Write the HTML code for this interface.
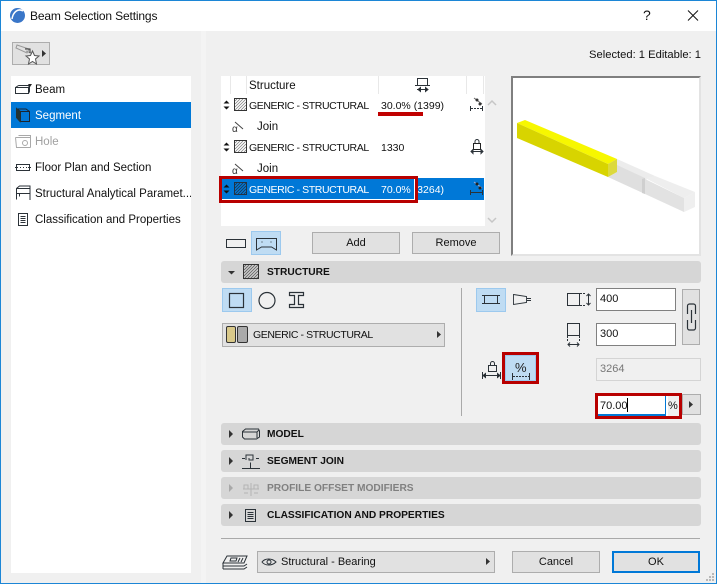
<!DOCTYPE html>
<html><head><meta charset="utf-8"><style>
html,body{margin:0;padding:0;background:#f0f0f0}
#p{position:relative;width:717px;height:584px;overflow:hidden;background:#f0f0f0;font-family:"Liberation Sans",sans-serif;font-size:11.5px;color:#111}
#p div{position:absolute;box-sizing:border-box}
.t{white-space:nowrap;height:16px;line-height:16px}
.u{font-size:10.5px;letter-spacing:-.4px}
.n{font-size:10.5px}
.b{background:#e1e1e1;border:1px solid #adadad;text-align:center;line-height:21px;font-size:11px}
.h{left:221px;width:480px;height:22px;background:#d6d6d6;border-radius:3px}
.ht{left:267px;font-weight:bold;font-size:10.2px;letter-spacing:0}
.a{background:#bfdcf3;border:1px solid #9cc9ee}
.i{background:#fff;border:1px solid #808080;padding-left:3px;line-height:21px;font-size:11px}
svg{position:absolute;left:0;top:0}
</style></head><body><div id="p">
<div style="left:0;top:0;width:717px;height:31px;background:#fff"></div>
<div style="left:201px;top:31px;width:5px;height:552px;background:#f4f4f4"></div>
<div style="left:11px;top:76px;width:180px;height:497px;background:#fff"></div>
<div style="left:11px;top:102px;width:180px;height:26px;background:#0078d7"></div>
<div class="t" style="left:30px;top:8px;font-size:12px;letter-spacing:-.15px">Beam Selection Settings</div>
<div class="t" style="left:643px;top:7px;font-size:14px">?</div>
<div class="t" style="right:16px;top:47px;font-size:11.2px">Selected: 1 Editable: 1</div>
<div style="left:12px;top:42px;width:38px;height:23px;background:#e1e1e1;border:1px solid #adadad"></div>

<div class="t" style="left:35px;top:82px">Beam</div>
<div class="t" style="left:35px;top:108px;color:#fff">Segment</div>
<div class="t" style="left:35px;top:134px;color:#a0a0a0">Hole</div>
<div class="t" style="left:35px;top:160px">Floor Plan and Section</div>
<div class="t" style="left:35px;top:186px;width:156px;overflow:hidden">Structural Analytical Paramet...</div>
<div class="t" style="left:35px;top:212px">Classification and Properties</div>

<div style="left:221px;top:76px;width:264px;height:150px;background:#fff"></div>
<div style="left:221px;top:178px;width:263px;height:22px;background:#0078d7"></div>
<div style="left:230px;top:76px;width:1px;height:18px;background:#e8e8e8"></div>
<div style="left:246px;top:76px;width:1px;height:18px;background:#e8e8e8"></div>
<div style="left:378px;top:76px;width:1px;height:18px;background:#e8e8e8"></div>
<div style="left:466px;top:76px;width:1px;height:18px;background:#e8e8e8"></div>
<div style="left:483px;top:76px;width:1px;height:18px;background:#e8e8e8"></div>
<div class="t" style="left:249px;top:78px">Structure</div>
<div class="t u" style="left:249px;top:98px">GENERIC - STRUCTURAL</div>
<div class="t n" style="left:381px;top:98px">30.0% (1399)</div>
<div class="t" style="left:257px;top:119px">Join</div>
<div class="t u" style="left:249px;top:140px">GENERIC - STRUCTURAL</div>
<div class="t n" style="left:381px;top:140px">1330</div>
<div class="t" style="left:257px;top:161px">Join</div>
<div class="t u" style="left:249px;top:182px;color:#fff">GENERIC - STRUCTURAL</div>
<div class="t n" style="left:381px;top:182px;color:#fff">70.0% (3264)</div>
<div style="left:378px;top:112px;width:45px;height:4px;background:#c00000"></div>
<div style="left:222px;top:199px;width:193px;height:1px;background:#fff"></div>
<div style="left:414px;top:179px;width:1px;height:21px;background:#fff"></div>
<div style="left:219px;top:176px;width:199px;height:27px;border:3px solid #b80000"></div>

<div style="left:511px;top:76px;width:190px;height:180px;background:#fff;border-top:2px solid #7f7f7f;border-left:2px solid #7f7f7f;border-right:2px solid #e3e3e3;border-bottom:2px solid #e3e3e3"></div>

<div class="a" style="left:251px;top:231px;width:30px;height:24px"></div>
<div class="b" style="left:312px;top:232px;width:88px;height:22px">Add</div>
<div class="b" style="left:412px;top:232px;width:88px;height:22px">Remove</div>

<div class="h" style="top:261px"></div>
<div class="t ht" style="top:265px">STRUCTURE</div>
<div class="a" style="left:222px;top:288px;width:30px;height:24px"></div>
<div class="b" style="left:222px;top:323px;width:223px;height:24px;text-align:left;padding-left:30px;line-height:23px"><span class="u">GENERIC - STRUCTURAL</span></div>
<div style="left:461px;top:288px;width:1px;height:128px;background:#a9a9a9"></div>
<div class="a" style="left:476px;top:288px;width:30px;height:24px"></div>
<div class="i" style="left:596px;top:288px;width:80px;height:23px">400</div>
<div class="i" style="left:596px;top:323px;width:80px;height:23px">300</div>
<div class="b" style="left:682px;top:289px;width:18px;height:56px"></div>
<div class="i" style="left:596px;top:358px;width:105px;height:23px;background:#f0f0f0;border-color:#d4d4d4;color:#777">3264</div>
<div style="left:502px;top:352px;width:37px;height:32px;border:3px solid #b80000;background:#bfdcf3;outline:1px solid #9cc9ee;outline-offset:-4px"></div>
<div style="left:595px;top:393px;width:87px;height:26px;border:3px solid #b80000;background:#fff"></div>
<div style="left:598px;top:414px;width:68px;height:2px;background:#0078d7"></div>
<div style="left:665px;top:396px;width:1px;height:20px;background:#0078d7"></div>
<div style="left:668px;top:396px;width:11px;height:20px;background:#f0f0f0"></div>
<div class="t" style="left:600px;top:398px;font-size:11px">70.00</div>
<div style="left:627px;top:398px;width:1px;height:14px;background:#000"></div>
<div class="t" style="left:668px;top:398px;font-size:11px">%</div>
<div class="b" style="left:682px;top:394px;width:19px;height:21px"></div>

<div class="h" style="top:423px"></div><div class="t ht" style="top:427px">MODEL</div>
<div class="h" style="top:450px"></div><div class="t ht" style="top:454px">SEGMENT JOIN</div>
<div class="h" style="top:477px"></div><div class="t ht" style="top:481px;color:#808080">PROFILE OFFSET MODIFIERS</div>
<div class="h" style="top:504px"></div><div class="t ht" style="top:508px">CLASSIFICATION AND PROPERTIES</div>
<div style="left:221px;top:538px;width:479px;height:1px;background:#a9a9a9"></div>
<div class="b" style="left:257px;top:551px;width:238px;height:22px;text-align:left;padding-left:23px">Structural - Bearing</div>
<div class="b" style="left:512px;top:551px;width:88px;height:22px">Cancel</div>
<div class="b" style="left:612px;top:551px;width:88px;height:22px;border:2px solid #0078d7;line-height:19px">OK</div>

<svg width="717" height="584" viewBox="0 0 717 584" fill="none" stroke="#2b3238" stroke-width="1">
<!-- window border -->
<path d="M0.5 584V0.5H716.5V584M0 583.5H717" stroke="#1c86d6"/>
<circle cx="17.500" cy="15.500" r="7.500" fill="#3a76c8" stroke="none"/><path d="M12 19c1-7 6-11 11-8" stroke="#fff" stroke-width="1.500"/>
<path d="M688 10.500l10 10M698 10.500l-10 10" stroke="#111"/>
<!-- tool button -->
<path d="M17 45l12 4-2 4-11-5zM26 51l7 3" stroke="#999"/><path d="M25 49h5v4" stroke="#333"/>
<path d="M32.500 51l2 4.500 4.500.5-3.500 3 1 5-4-2.500-4 2.500 1-5-3.500-3 4.500-.5z" fill="#fff" stroke="#555"/>
<path d="M42 50l4 3.500-4 3.500z" fill="#333" stroke="none"/>
<!-- left icons -->
<path d="M15.500 87.500h13v6h-13zM18.500 85.500h11v6l-1 2M15.500 87.500l3-2M28.500 87.500l1-2"/>
<path d="M28 84h4l-2 3z" fill="#222" stroke="none"/>
<path d="M20.500 111.500h9v10h-9zM17 109l3.500 2.500M17 109h9l3.500 2.500" stroke="#1b2530"/><path d="M16.500 108.500v9l3.500 4v-9.500z" fill="#233" stroke="#233"/>
<path d="M15.500 137.500h15M18.500 135.500h12v2M15.500 137.500l1 10h14M30.500 137.500v10" stroke="#a9a9a9"/><circle cx="25" cy="143" r="2.500" stroke="#a9a9a9"/>
<path d="M16.500 164.500h13v6h-13zM15 167.500h16"/><path d="M18 167.500h10" stroke="#fff" stroke-dasharray="2 1"/>
<path d="M16.500 199.500v-11l3-2.500h10.500v14M16.500 188.500h13.500M16.500 193.500h13.500M19.500 193.500v3"/>
<path d="M18.500 213.500h9v12h-9zM20.500 216.500h5M20.500 218.500h5M20.500 220.500h5M20.500 222.500h5"/>
<!-- list icons -->
<g fill="#111" stroke="none"><path d="M226.500 100.500l3 3h-6zM226.500 109.500l3-3h-6zM226.500 142.500l3 3h-6zM226.500 151.500l3-3h-6zM226.500 184.500l3 3h-6zM226.500 193.500l3-3h-6z"/></g>
<path d="M235 101l2-2M235 104l5-5M235 107l8-8M235 110l11-11M238 110l8-8M241 110l5-5M244 110l2-2" stroke="#808080" stroke-width=".8"/><rect x="234.500" y="98.500" width="12" height="12" stroke="#333"/>
<path d="M235 143l2-2M235 146l5-5M235 149l8-8M235 152l11-11M238 152l8-8M241 152l5-5M244 152l2-2" stroke="#808080" stroke-width=".8"/><rect x="234.500" y="140.500" width="12" height="12" stroke="#333"/>
<path d="M235 185l2-2M235 188l5-5M235 191l8-8M235 194l11-11M238 194l8-8M241 194l5-5M244 194l2-2" stroke="#234" stroke-width=".8"/><rect x="234.500" y="182.500" width="12" height="12" stroke="#234"/>
<path d="M235 122l8 7M235 164l8 7" stroke="#444"/>
<text x="232" y="132" font-family="Liberation Sans" font-size="10" fill="#333" stroke="none">α</text>
<text x="232" y="174" font-family="Liberation Sans" font-size="10" fill="#333" stroke="none">α</text>
<path d="M417.500 78.500h10v7h-10zM415 85.500h15M417 89.500h11"/><path d="M418 89.500l2.500-2v4zM428 89.500l-2.500-2v4z" fill="#222"/>
<path d="M470.500 106v5M482.500 106v5"/><path d="M471 108.500h11" stroke-dasharray="2 1"/><path d="M474 98l8 6" stroke="#666"/><circle cx="477" cy="100" r="1.500" fill="#333" stroke="none"/><circle cx="480" cy="104" r="1.500" fill="#333" stroke="none"/>
<path d="M470.500 190v5M482.500 190v5M471 192.500h11"/><path d="M474 182l8 6" stroke="#aac"/><circle cx="477" cy="184" r="1.500" fill="#222" stroke="none"/><circle cx="480" cy="188" r="1.500" fill="#222" stroke="none"/>
<rect x="473.500" y="143.500" width="7" height="6" fill="#fff" stroke="#222"/><path d="M475 143v-1.500a2 2 0 014 0v1.500M471 151.500h12M471 151.500l2-2v4zM483 151.500l-2-2v4z"/>
<path d="M488 105l4-4 4 4M488 218l4 4 4-4" stroke="#c6c6c6" stroke-width="1.500"/>
<!-- preview -->
<path d="M617 159l38 17-10 4-37-16z" fill="#ececec" stroke="none"/>
<path d="M617 172v-7l28 13v16l-37-17z" fill="#dfdfdf" stroke="none"/>
<path d="M645 178l10-2 40 16-11 6z" fill="#eeeeee" stroke="none"/>
<path d="M645 179l39 19v14l-39-18z" fill="#e2e2e2" stroke="none"/>
<path d="M684 198l11-6v15l-11 5z" fill="#efefef" stroke="none"/>
<path d="M645 178v16l-3-1v-14z" fill="#cfcfcf" stroke="none"/>
<path d="M517 123l8-3 92 39-9 5z" fill="#f7f700" stroke="none"/>
<path d="M517 123l91 41v13l-91-39z" fill="#d8d400" stroke="none"/>
<path d="M608 164l9-5v13l-9 5z" fill="#dcd93d" stroke="none"/>
<!-- shape buttons -->
<rect x="226.500" y="239.500" width="19" height="8"/>
<path d="M256.500 238.500h20v11.500l-5-3h-10l-5 3zM262 241.500v1M271 241.500v1"/>
<rect x="229.500" y="293.500" width="14" height="14" stroke-width="1.200"/>
<circle cx="267" cy="300.500" r="8" stroke-width="1.200"/>
<path d="M289.500 292.500h14v3h-5v9h5v3h-14v-3h5v-9h-5z" stroke-width="1.200"/>
<rect x="226.500" y="326.500" width="9" height="16" rx="1.500" fill="#d9c98a" stroke="#333"/>
<rect x="237.500" y="326.500" width="10" height="16" rx="1.500" fill="#aaaaaa" stroke="#333"/>
<path d="M437 331l4 3.500-4 3.500z" fill="#333" stroke="none"/>
<path d="M228 271h7l-3.500 3.500z" fill="#333" stroke="none"/>
<path d="M244 267l2-2M244 270l5-5M244 273l8-8M244 276l11-11M244 279l14-14M247 279l11-11M250 279l8-8M253 279l5-5M256 279l2-2" stroke="#666" stroke-width=".9"/><rect x="243.500" y="264.500" width="15" height="14" stroke="#333"/>
<path d="M484.500 295.500h13v8h-13zM482 295.500h18M482 303.500h18"/>
<path d="M513.500 294.500l13 2v6l-13 2zM527 298.500h4M527 300.500h4" stroke-width=".9"/>
<rect x="567.500" y="293.500" width="12" height="12"/><path d="M580 293.500h5M580 305.500h5" stroke-dasharray="2 1"/><path d="M588.500 294v11M586.500 296l2-2 2 2M586.500 303l2 2 2-2"/>
<rect x="567.500" y="323.500" width="12" height="12"/><path d="M567.500 336v6M579.500 336v6" stroke-dasharray="2 1"/><path d="M568 344.500h11M570 342.500l-2 2 2 2M577 342.500l2 2-2 2"/>
<path d="M687.500 314v-8a2 2 0 012-2h4a2 2 0 012 2v8M687.500 320v8a2 2 0 002 2h4a2 2 0 002-2v-8M691.500 310v13" stroke-width="1.200"/>
<rect x="488.500" y="365.500" width="8" height="6"/><path d="M490.500 365v-1.500a2 2 0 014 0v1.500"/>
<path d="M482.500 372v7M500.500 372v7M483 375.500h17"/><path d="M483 375.500l2.500-2v4zM500 375.500l-2.500-2v4z" fill="#222"/>
<path d="M513 376.500h16" stroke-dasharray="2 1"/><path d="M512.500 373v7M529.500 373v7"/>
<text x="515" y="372" font-family="Liberation Sans" font-size="13" fill="#222" stroke="none">%</text>
<path d="M689 401l4 3.500-4 3.500z" fill="#333" stroke="none"/>
<!-- collapsed -->
<path d="M229 430l4 4-4 4zM229 457l4 4-4 4zM229 511l4 4-4 4z" fill="#333" stroke="none"/><path d="M229 484l4 4-4 4z" fill="#a8a8a8" stroke="none"/>
<path d="M242.500 431.500l3-2.500h13l1 2v6l-3 2h-12l-2-2zM243 432h14v6M257 432l2-2"/>
<path d="M242 468.500h18M250.500 468.500v-6M242 458.500h3M256 458.500h3M246 460v-5h7v5h-4v-2"/>
<path d="M244 485h4v4h-4zM254 485h4v4h-4zM244 493h4M254 493h4M251 483v13M243 489h16" stroke="#b4b4b4"/>
<rect x="245.500" y="509.500" width="10" height="12"/><path d="M247.500 512.500h6M247.500 514.500h6M247.500 516.500h6M247.500 518.500h6"/>
<path d="M223 563l4-7h20l-3 7zM223 566h21l3-2M223 569h21l3-2M223 563v6M231 558h6l-1 3h-6zM240 558l-2 4M243 558l-2 4"/>
<path d="M262 562c3-4 10-4 14 0-4 4-11 4-14 0z"/><circle cx="269" cy="562" r="2"/>
<path d="M486 558l4 3.500-4 3.500z" fill="#333" stroke="none"/>
<path d="M713 573v2M710 576v2M713 576v2M707 579v2M710 579v2M713 579v2" stroke="#b8b8b8" stroke-width="2"/>
</svg>
</div></body></html>
